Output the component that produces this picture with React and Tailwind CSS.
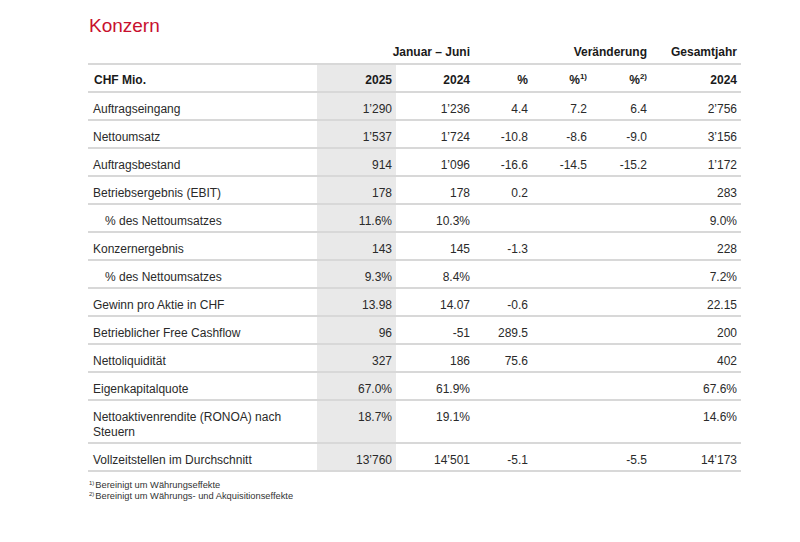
import React from "react";

const cols = "grid grid-cols-[229px_79px_78px_58px_59px_60px_90px]";

const rows = [
  { label: "Auftragseingang", v: ["1’290", "1’236", "4.4", "7.2", "6.4", "2’756"] },
  { label: "Nettoumsatz", v: ["1’537", "1’724", "-10.8", "-8.6", "-9.0", "3’156"] },
  { label: "Auftragsbestand", v: ["914", "1’096", "-16.6", "-14.5", "-15.2", "1’172"] },
  { label: "Betriebsergebnis (EBIT)", v: ["178", "178", "0.2", "", "", "283"] },
  { label: "% des Nettoumsatzes", indent: true, v: ["11.6%", "10.3%", "", "", "", "9.0%"] },
  { label: "Konzernergebnis", v: ["143", "145", "-1.3", "", "", "228"] },
  { label: "% des Nettoumsatzes", indent: true, v: ["9.3%", "8.4%", "", "", "", "7.2%"] },
  { label: "Gewinn pro Aktie in CHF", v: ["13.98", "14.07", "-0.6", "", "", "22.15"] },
  { label: "Betrieblicher Free Cashflow", v: ["96", "-51", "289.5", "", "", "200"] },
  { label: "Nettoliquidität", v: ["327", "186", "75.6", "", "", "402"] },
  { label: "Eigenkapitalquote", v: ["67.0%", "61.9%", "", "", "", "67.6%"] },
  { label: "Nettoaktivenrendite (RONOA) nach Steuern", tall: true, v: ["18.7%", "19.1%", "", "", "", "14.6%"] },
  { label: "Vollzeitstellen im Durchschnitt", v: ["13’760", "14’501", "-5.1", "", "-5.5", "14’173"] },
];

const Row = ({ row }) => (
  <div className={`${cols} border-b-2 border-[#d8d8d8] ${row.tall ? "h-[43px]" : "h-[28px]"}`}>
    <div className={`pt-[9px] pr-2 ${row.indent ? "pl-[17px]" : "pl-[5px]"}`}>{row.label}</div>
    {row.v.map((val, i) => (
      <div key={i} className={`pt-[9px] pr-[4px] text-right ${i === 0 ? "bg-[#e9e9e9]" : ""}`}>
        {val}
      </div>
    ))}
  </div>
);

export default function App() {
  return (
    <div
      className="w-[800px] h-[542px] bg-white pl-[88px] pt-[15px] text-[#2a2a2a]"
      style={{ fontFamily: '"Liberation Sans", Arial, sans-serif' }}
    >
      <h1 className="text-[19px] leading-[22px] text-[#c8102e] pl-px">Konzern</h1>

      <div className="w-[653px] text-[12px] leading-[15px]">
        <div className={`${cols} h-[28px] border-b-2 border-[#d8d8d8] font-bold text-[#1a1a1a]`}>
          <div />
          <div className="col-span-2 flex items-end justify-end pr-[4px] pb-[3px]">Januar – Juni</div>
          <div className="col-span-3 flex items-end justify-end pr-[4px] pb-[3px]">Veränderung</div>
          <div className="flex items-end justify-end pr-[4px] pb-[3px]">Gesamtjahr</div>
        </div>

        <div className={`${cols} h-[28px] border-b-2 border-[#d8d8d8] font-bold text-[#1a1a1a]`}>
          <div className="pt-[8px] pl-[6px]">CHF Mio.</div>
          <div className="pt-[8px] pr-[4px] text-right bg-[#e9e9e9]">2025</div>
          <div className="pt-[8px] pr-[4px] text-right">2024</div>
          <div className="pt-[8px] pr-[4px] text-right">%</div>
          <div className="pt-[8px] pr-[4px] text-right">
            %<sup className="text-[8px] -top-[5px]">1)</sup>
          </div>
          <div className="pt-[8px] pr-[4px] text-right">
            %<sup className="text-[8px] -top-[5px]">2)</sup>
          </div>
          <div className="pt-[8px] pr-[4px] text-right">2024</div>
        </div>

        {rows.map((row, i) => (
          <Row key={i} row={row} />
        ))}
      </div>

      <div className="mt-[8px] pl-[1px] text-[9.3px] leading-[11px] text-[#333]">
        <div>
          <sup className="text-[6px] mr-[1px]">1)</sup>Bereinigt um Währungseffekte
        </div>
        <div>
          <sup className="text-[6px] mr-[1px]">2)</sup>Bereinigt um Währungs- und Akquisitionseffekte
        </div>
      </div>
    </div>
  );
}
